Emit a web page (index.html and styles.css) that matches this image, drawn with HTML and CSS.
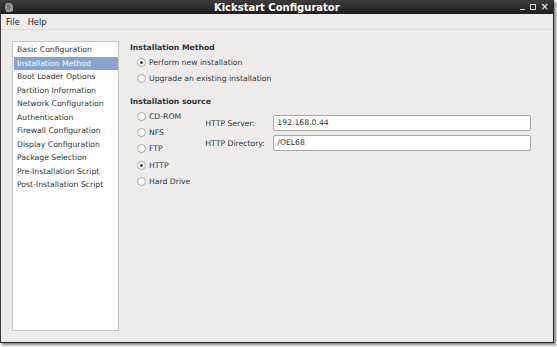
FILE: index.html
```html
<html>
    <head>
        <title>Kickstart Configurator</title>
        <link rel="stylesheet" href="styles.css">
    </head>
    <body>
        <div class="Ventana">
            <!-- Barra de titulo -->
            <div class="Titulo">
                <svg class="Icono" width="10" height="11" viewBox="0 0 10 11">
                    <path d="M2 1 L7 1 L9 4 L9 9 L6 10 L2 10 L1 6 Z" fill="#9a9a9a"/>
                    <path d="M3 3 L6 3 M3 5 L7 5 M3 7 L6 7" stroke="#5a5a5a" stroke-width="1"/>
                </svg>
                <span class="Nombre">Kickstart Configurator</span>
                <div class="Botones">
                    <span class="Min"></span>
                    <span class="Max"></span>
                    <span class="Cerrar">&#215;</span>
                </div>
            </div>

            <!-- Menu -->
            <div class="Menu">
                <span>File</span>
                <span>Help</span>
            </div>

            <div class="Cuerpo">
                <!-- Lista de secciones -->
                <ul class="Lista">
                    <li>Basic Configuration</li>
                    <li class="Activo">Installation Method</li>
                    <li>Boot Loader Options</li>
                    <li>Partition Information</li>
                    <li>Network Configuration</li>
                    <li>Authentication</li>
                    <li>Firewall Configuration</li>
                    <li>Display Configuration</li>
                    <li>Package Selection</li>
                    <li>Pre-Installation Script</li>
                    <li>Post-Installation Script</li>
                </ul>

                <!-- Panel derecho -->
                <div class="Panel">
                    <div class="Seccion">Installation Method</div>
                    <div class="Opciones">
                        <div class="Opcion"><span class="Radio Marcado"></span>Perform new installation</div>
                        <div class="Opcion"><span class="Radio"></span>Upgrade an existing installation</div>
                    </div>

                    <div class="Seccion Fuente">Installation source</div>
                    <div class="Origen">
                        <div class="Opciones">
                            <div class="Opcion"><span class="Radio"></span>CD-ROM</div>
                            <div class="Opcion"><span class="Radio"></span>NFS</div>
                            <div class="Opcion"><span class="Radio"></span>FTP</div>
                            <div class="Opcion"><span class="Radio Marcado"></span>HTTP</div>
                            <div class="Opcion"><span class="Radio"></span>Hard Drive</div>
                        </div>
                        <div class="Campos">
                            <div class="Campo">
                                <label>HTTP Server:</label>
                                <div class="Entrada">192.168.0.44</div>
                            </div>
                            <div class="Campo">
                                <label>HTTP Directory:</label>
                                <div class="Entrada">/OEL68</div>
                            </div>
                        </div>
                    </div>
                </div>
            </div>
        </div>
    </body>
</html>
```

FILE: styles.css
```css
body{
    margin: 0;
    background-color: #f2f2f2;
    font-family: "DejaVu Sans", sans-serif;
    font-size: 7.7px;
    color: #2e3436;
}

.Ventana{
    width: 552px;
    height: 342px;
    border-left: 1px solid #3a3a3a;
    border-right: 1px solid #2a2a2a;
    border-bottom: 1px solid #2a2a2a;
    background-color: #edecea;
    box-shadow: 2px 2px 2px #8a8a8a;
    display: flex;
    flex-direction: column;
}

.Titulo{
    height: 14px;
    background: linear-gradient(#3c3c3c, #1e1e1e);
    display: flex;
    align-items: center;
    color: #ffffff;
    font-weight: bold;
    font-size: 10px;
    padding: 0 4px 0 3px;
}

.Icono{
    margin-top: 1px;
}

.Nombre{
    flex: 1;
    text-align: center;
    padding-left: 20px;
}

.Botones{
    display: flex;
    align-items: center;
    gap: 5px;
    color: #d8d8d8;
}

.Min{
    width: 5px;
    height: 1px;
    margin-top: 5px;
    background-color: #d8d8d8;
}

.Max{
    width: 4px;
    height: 4px;
    border: 1px solid #d8d8d8;
}

.Cerrar{
    font-size: 10px;
    line-height: 10px;
}

.Menu{
    height: 15px;
    display: flex;
    align-items: center;
    gap: 8px;
    padding-left: 5px;
    border-bottom: 1px solid #dcdbd8;
    font-size: 8.2px;
    color: #222;
}

.Cuerpo{
    flex: 1;
    display: flex;
    padding: 11px 12px 11px 11px;
}

.Lista{
    list-style: none;
    margin: 0;
    padding: 1px 0 0 1px;
    width: 104px;
    background-color: #ffffff;
    border: 1px solid #c8c6c2;
}

.Lista li{
    height: 13.5px;
    line-height: 13.5px;
    padding-left: 3px;
    white-space: nowrap;
}

.Lista .Activo{
    background-color: #86a4cc;
    color: #ffffff;
}

.Panel{
    flex: 1;
    padding: 0 0 0 11px;
}

.Seccion{
    font-weight: bold;
    height: 13px;
    line-height: 13px;
}

.Fuente{
    margin-top: 9px;
}

.Opciones{
    padding-left: 7px;
}

.Opcion{
    height: 16.2px;
    display: flex;
    align-items: center;
}

.Radio{
    width: 7px;
    height: 7px;
    border: 1px solid #a9a7a3;
    border-radius: 50%;
    background-color: #fbfbfa;
    margin-right: 3px;
    display: flex;
    align-items: center;
    justify-content: center;
}

.Marcado::after{
    content: "";
    width: 3px;
    height: 3px;
    border-radius: 50%;
    background-color: #3a3a3a;
}

.Origen{
    display: flex;
}

.Campos{
    flex: 1;
    padding-left: 15px;
    padding-top: 7px;
    display: flex;
    flex-direction: column;
    gap: 4px;
}

.Campo{
    display: flex;
    align-items: center;
}

.Campo label{
    width: 68px;
}

.Entrada{
    flex: 1;
    height: 14px;
    line-height: 14px;
    background-color: #ffffff;
    border: 1px solid #a9a7a3;
    border-radius: 2px;
    padding-left: 3px;
    margin-right: 10px;
}
```
